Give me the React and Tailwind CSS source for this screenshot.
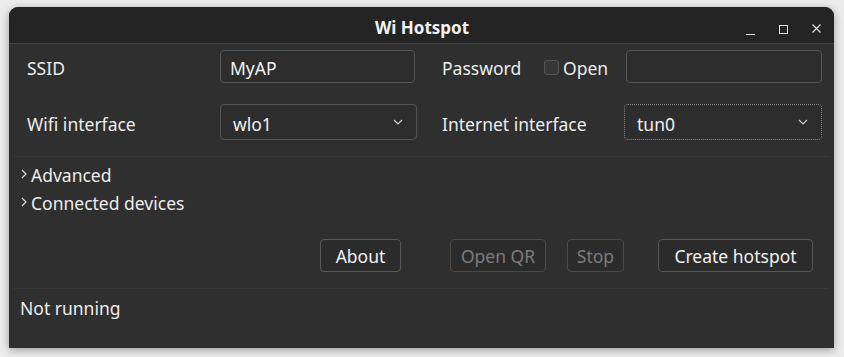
import React from "react";

const font = { fontFamily: '"Noto Sans", "Open Sans", sans-serif' };

const Chevron = ({ dir = "down" }) =>
  dir === "down" ? (
    <svg width="10" height="6" viewBox="0 0 10 6" className="shrink-0">
      <path d="M1 1l4 4 4-4" fill="none" stroke="#cfcfcf" strokeWidth="1.2" />
    </svg>
  ) : (
    <svg width="6" height="10" viewBox="0 0 6 10" className="shrink-0">
      <path d="M1 1l4 4-4 4" fill="none" stroke="#dcdcdc" strokeWidth="1.1" />
    </svg>
  );

const Combo = ({ value, focused, width }) => (
  <div
    className={`h-[36px] rounded-[4px] flex items-center justify-between pl-[12px] pr-[13px] bg-[#2d2d2d] ${
      focused ? "border border-dotted border-[#8a8a8a]" : "border border-[#555555]"
    } ${width}`}
  >
    <span className="text-[#f0f0f0] pt-[4px]">{value}</span>
    <Chevron />
  </div>
);

const Button = ({ children, disabled, width }) => (
  <button
    className={`h-[33px] rounded-[4px] border bg-[#2b2b2b] flex items-center justify-center pt-[2px] ${
      disabled ? "border-[#4a4a4a] text-[#7c7c7c]" : "border-[#595959] text-[#f0f0f0]"
    } ${width}`}
  >
    {children}
  </button>
);

export default function App() {
  return (
    <div className="w-[844px] h-[357px] bg-[#ececec] pt-[7px] pl-[9px]" style={font}>
      <div className="w-[825px] h-[341px] rounded-t-[9px] bg-[#2f2f2f] flex flex-col overflow-hidden shadow-[0_2px_8px_rgba(0,0,0,0.35)] text-[17.5px] text-[#ececec]">
        {/* title bar */}
        <div className="h-[37px] shrink-0 bg-[#242424] border-b border-[#444444] flex items-center relative">
          <div className="flex-1 text-center font-bold text-[#f2f2f2] text-[17px] pl-[1px] pt-[5px]">Wi Hotspot</div>
          <div className="absolute right-[13px] top-[15px] flex items-center gap-[24px]">
            <div className="w-[9px] h-[1px] bg-[#e0e0e0] mt-[12px]" />
            <div className="w-[9px] h-[9px] border border-[#e0e0e0] mt-[1px]" />
            <svg width="9" height="9" viewBox="0 0 9 9">
              <path d="M0.5 0.5l8 8M8.5 0.5l-8 8" stroke="#e0e0e0" strokeWidth="1.2" />
            </svg>
          </div>
        </div>

        {/* form */}
        <div className="pl-[18px] pr-[12px] pt-[6px]">
          <div className="flex items-center h-[33px]">
            <div className="w-[193px] pt-[4px]">SSID</div>
            <div className="w-[195px] h-[33px] rounded-[4px] border border-[#575757] bg-[#2d2d2d] flex items-center pl-[9px] pt-[4px] text-[#f2f2f2]">
              MyAP
            </div>
            <div className="w-[102px] ml-[27px] pt-[4px]">Password</div>
            <div className="flex items-center gap-[4px] w-[82px]">
              <div className="w-[15px] h-[15px] rounded-[3px] border border-[#555555] bg-[#373737] mt-[2px]" />
              <span className="pt-[4px]">Open</span>
            </div>
            <div className="w-[196px] h-[33px] rounded-[4px] border border-[#575757] bg-[#2d2d2d]" />
          </div>
          <div className="flex items-center h-[36px] mt-[21px]">
            <div className="w-[193px] pt-[4px]">Wifi interface</div>
            <Combo value="wlo1" width="w-[197px]" />
            <div className="w-[182px] ml-[25px] pt-[4px]">Internet interface</div>
            <Combo value="tun0" focused width="w-[198px]" />
          </div>
        </div>

        <div className="mx-[5px] mt-[16px] h-[1px] bg-[#383838]" />

        <div className="pl-[12px] pt-[3px] flex flex-col">
          <div className="flex items-center gap-[4px] h-[28px]">
            <Chevron dir="right" />
            <span className="pt-[3px]">Advanced</span>
          </div>
          <div className="flex items-center gap-[4px] h-[28px]">
            <Chevron dir="right" />
            <span className="pt-[3px]">Connected devices</span>
          </div>
        </div>

        <div className="flex items-center mt-[23px] pl-[311px]">
          <Button width="w-[81px]">About</Button>
          <Button disabled width="w-[96px] ml-[49px]">Open QR</Button>
          <Button disabled width="w-[57px] ml-[21px]">Stop</Button>
          <Button width="w-[155px] ml-[34px]">Create hotspot</Button>
        </div>

        <div className="mx-[5px] mt-[16px] h-[1px] bg-[#383838]" />

        <div className="pl-[11px] pt-[6px]">Not running</div>
      </div>
    </div>
  );
}
